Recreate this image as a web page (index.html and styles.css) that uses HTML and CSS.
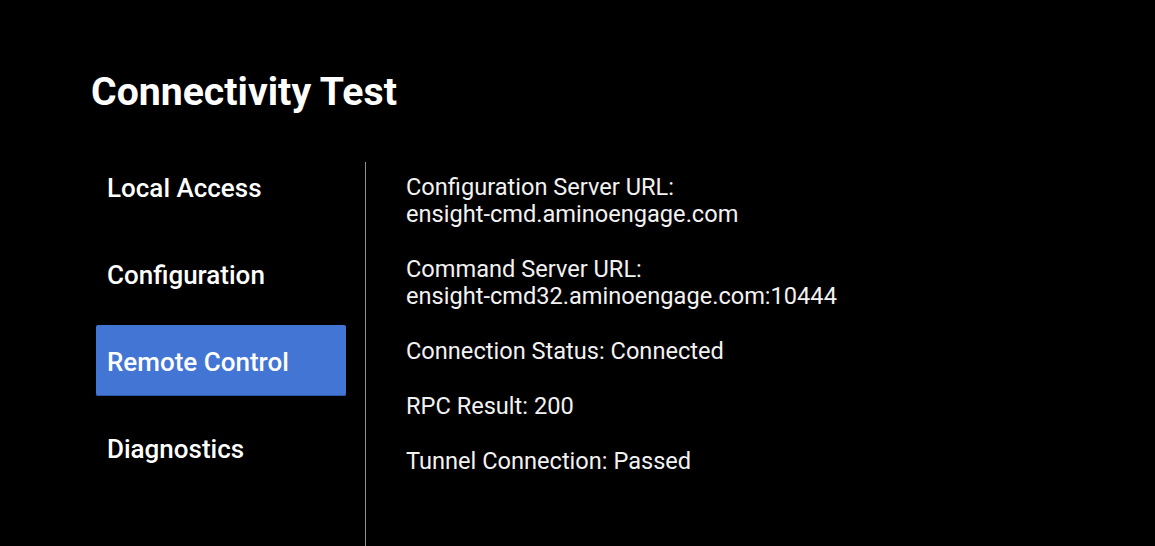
FILE: index.html
```html
<!DOCTYPE html>
<html lang="en">
<head>
<meta charset="utf-8">
<title>Connectivity Test</title>
<link rel="stylesheet" href="styles.css">
</head>
<body>
<div class="page">
  <h1 class="title">Connectivity Test</h1>
  <div class="main">
    <ul class="menu">
      <li class="menu-item">Local Access</li>
      <li class="menu-item">Configuration</li>
      <li class="menu-item active">Remote Control</li>
      <li class="menu-item">Diagnostics</li>
    </ul>
    <div class="divider"></div>
    <div class="content">
      <div class="info">Configuration Server URL:<br>ensight-cmd.aminoengage.com</div>
      <div class="info">Command Server URL:<br>ensight-cmd32.aminoengage.com:10444</div>
      <div class="info">Connection Status: Connected</div>
      <div class="info">RPC Result: 200</div>
      <div class="info">Tunnel Connection: Passed</div>
    </div>
  </div>
</div>
</body>
</html>
```
FILE: styles.css
```css
html, body {
  margin: 0;
  padding: 0;
  background: #000;
  height: 100%;
  overflow: hidden;
}
.page {
  font-family: Roboto, "Noto Sans", sans-serif;
  color: #fff;
  padding-left: 91px;
  height: 546px;
  display: flex;
  flex-direction: column;
}
.title {
  margin: 70px 0 0 0;
  font-size: 39.2px;
  line-height: 44px;
  font-weight: 700;
  height: 44px;
}
.main {
  margin-top: 37px;
  flex: 1;
  display: flex;
}
.menu {
  list-style: none;
  margin: 0 0 0 5px;
  padding: 0;
  width: 250px;
  display: flex;
  flex-direction: column;
  gap: 16px;
}
.menu-item {
  height: 71px;
  box-sizing: border-box;
  padding: 3px 0 0 11px;
  font-size: 26px;
  font-weight: 500;
  line-height: 68px;
  color: #fff;
  border-radius: 2px;
}
.menu-item.active {
  background: #4275d4;
  box-shadow: inset 0 -1px 0 #2f5aa8;
}
.divider {
  width: 1px;
  background: #909090;
  margin: 11px 0 0 19px;
}
.content {
  padding: 23px 0 0 40px;
  display: flex;
  flex-direction: column;
  gap: 28px;
}
.info {
  font-size: 23.6px;
  line-height: 27px;
  color: #f2f2f2;
}
```
